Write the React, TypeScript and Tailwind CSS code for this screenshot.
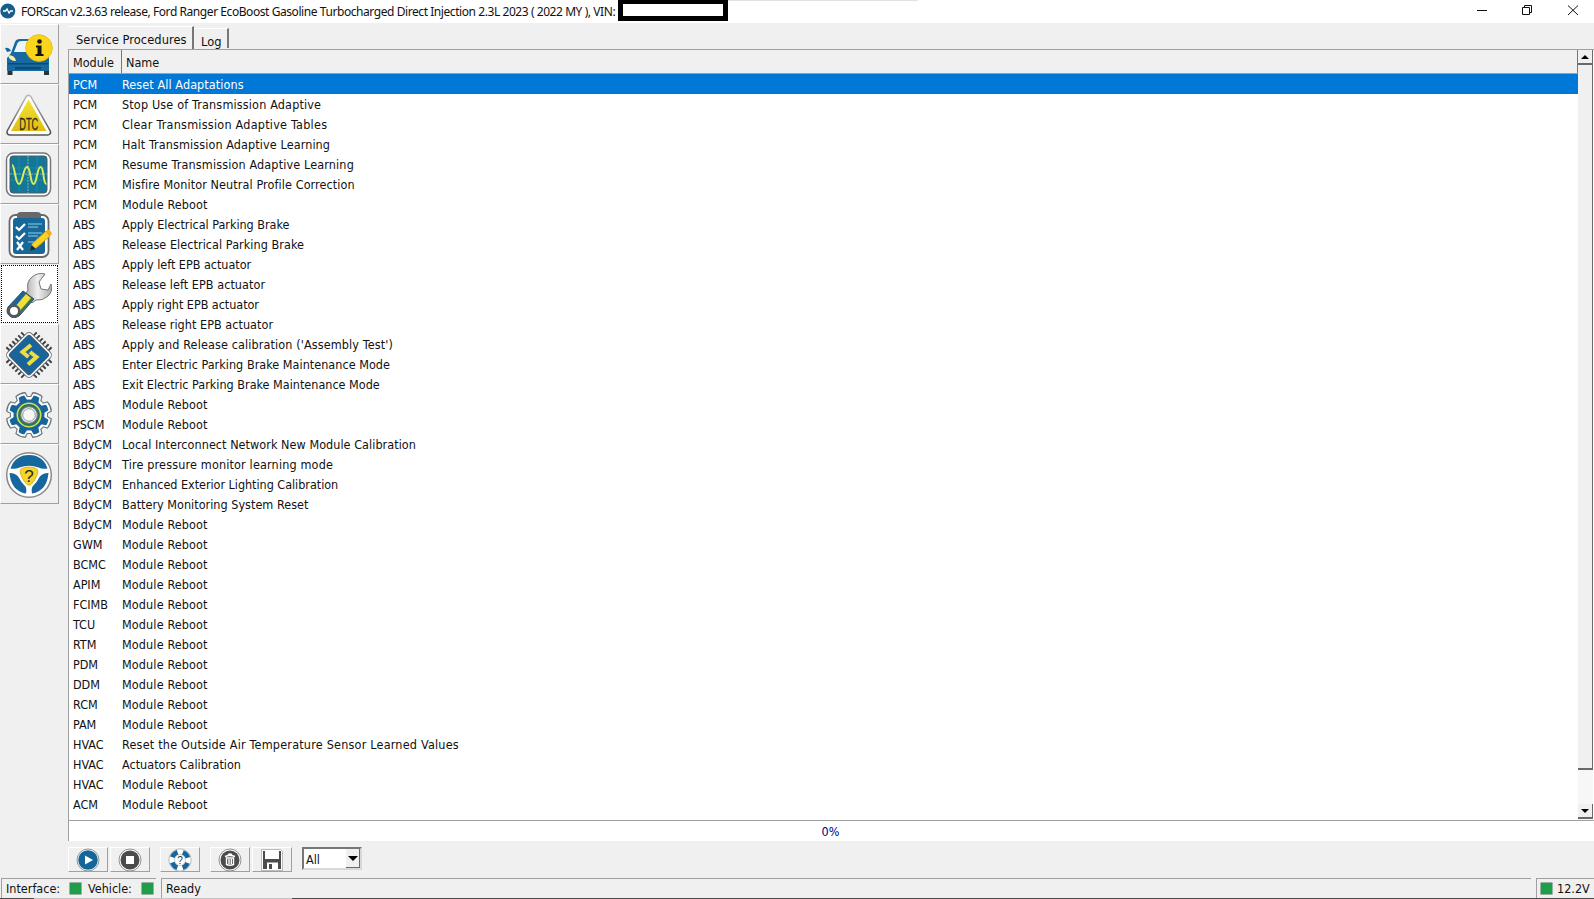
import React from 'react';

const REBOOT = 'tracking-[0.13px]';

const rows: [string, string, string][] = [
  ['PCM', 'Reset All Adaptations', 'tracking-[0.09px]'],
  ['PCM', 'Stop Use of Transmission Adaptive', 'tracking-[0.16px]'],
  ['PCM', 'Clear Transmission Adaptive Tables', 'tracking-[0.24px]'],
  ['PCM', 'Halt Transmission Adaptive Learning', 'tracking-[0.1px]'],
  ['PCM', 'Resume Transmission Adaptive Learning', 'tracking-[0.14px]'],
  ['PCM', 'Misfire Monitor Neutral Profile Correction', 'tracking-[0.1px]'],
  ['PCM', 'Module Reboot', REBOOT],
  ['ABS', 'Apply Electrical Parking Brake', 'tracking-[-0.02px]'],
  ['ABS', 'Release Electrical Parking Brake', 'tracking-[0.06px]'],
  ['ABS', 'Apply left EPB actuator', 'tracking-[-0.02px]'],
  ['ABS', 'Release left EPB actuator', 'tracking-[0.05px]'],
  ['ABS', 'Apply right EPB actuator', 'tracking-[-0.04px]'],
  ['ABS', 'Release right EPB actuator', 'tracking-[0.04px]'],
  ['ABS', "Apply and Release calibration ('Assembly Test')", 'tracking-[0.12px]'],
  ['ABS', 'Enter Electric Parking Brake Maintenance Mode', 'tracking-[0.03px]'],
  ['ABS', 'Exit Electric Parking Brake Maintenance Mode', 'tracking-[0px]'],
  ['ABS', 'Module Reboot', REBOOT],
  ['PSCM', 'Module Reboot', REBOOT],
  ['BdyCM', 'Local Interconnect Network New Module Calibration', 'tracking-[0.05px]'],
  ['BdyCM', 'Tire pressure monitor learning mode', 'tracking-[0.16px]'],
  ['BdyCM', 'Enhanced Exterior Lighting Calibration', 'tracking-[-0.03px]'],
  ['BdyCM', 'Battery Monitoring System Reset', 'tracking-[0.02px]'],
  ['BdyCM', 'Module Reboot', REBOOT],
  ['GWM', 'Module Reboot', REBOOT],
  ['BCMC', 'Module Reboot', REBOOT],
  ['APIM', 'Module Reboot', REBOOT],
  ['FCIMB', 'Module Reboot', REBOOT],
  ['TCU', 'Module Reboot', REBOOT],
  ['RTM', 'Module Reboot', REBOOT],
  ['PDM', 'Module Reboot', REBOOT],
  ['DDM', 'Module Reboot', REBOOT],
  ['RCM', 'Module Reboot', REBOOT],
  ['PAM', 'Module Reboot', REBOOT],
  ['HVAC', 'Reset the Outside Air Temperature Sensor Learned Values', 'tracking-[0.21px]'],
  ['HVAC', 'Actuators Calibration', 'tracking-[0.02px]'],
  ['HVAC', 'Module Reboot', REBOOT],
  ['ACM', 'Module Reboot', REBOOT],
];

const CarIcon = () => (
  <svg width="50" height="50" viewBox="0 0 50 50">
    <path d="M3.500 45v-7h5v7zM40 45v-7h5v7z" fill="#2d3238" />
    <path d="M7 23 11 12q1-3 5-3h16q4 0 6 4l4 10 3 4v14H3V28z" fill="#176a9f" />
    <path d="M10 22 13.500 13q1-2 4-2h15l5 11z" fill="#eef5f8" />
    <path d="M1 18q4-1 6 3l-4 1z" fill="#176a9f" />
    <path d="M4 33h40v1.500H4zM11 37h26v2.500H11z" fill="#0d4b77" />
    <path d="M4 25q7 0 8 6-7 0-8-6z" fill="#f5efb0" />
    <circle cx="35" cy="18" r="13.300" fill="#fbd51b" stroke="#f0bd12" />
    <circle cx="35.500" cy="11.500" r="2.300" fill="#171717" />
    <path d="M32 15.500h5.500v8.500h2v2h-8v-2h2v-6.500h-1.500z" fill="#171717" />
  </svg>
);

const DtcIcon = () => (
  <svg width="50" height="50" viewBox="0 0 50 50">
    <defs>
      <linearGradient id="dtcFill" x2="0" y2="1"><stop stopColor="#f4e431" /><stop offset="1" stopColor="#dfbd14" /></linearGradient>
      <linearGradient id="dtcRim" x2="0" y2="1"><stop stopColor="#b4b4b4" /><stop offset="1" stopColor="#555" /></linearGradient>
    </defs>
    <path d="M24.500 8.500 43.500 42H6z" fill="none" stroke="url(#dtcRim)" strokeWidth="7.500" strokeLinejoin="round" />
    <path d="M24.500 8.500 43.500 42H6z" fill="url(#dtcFill)" stroke="#fff" strokeWidth="4.500" strokeLinejoin="round" />
    <path d="M24.500 9.500 42.500 41H7z" fill="url(#dtcFill)" />
    <text x="24.800" y="40" textAnchor="middle" textLength="19" lengthAdjust="spacingAndGlyphs" fontFamily="Liberation Sans, sans-serif" fontSize="16.500" stroke="#2d3018" strokeWidth=".3" fill="#2d3018">DTC</text>
  </svg>
);

const ScopeIcon = () => (
  <svg width="50" height="50" viewBox="0 0 50 50">
    <rect x="2.500" y="3" width="44" height="43" rx="7" fill="#fff" stroke="#73777b" strokeWidth="1.500" />
    <rect x="6" y="6" width="37" height="37" rx="3" fill="#137799" stroke="#4d5a62" />
    <path d="M6 18h37M6 30h37M15 6v37M33 6v37" stroke="#2890a4" strokeWidth=".7" />
    <path d="M6 24h37M24 6v37" stroke="#7db4b4" strokeDasharray="2 1" />
    <path d="M8 15c3 0 3 19 7 19s4-17 8-17 3 17 6.500 17S33 17 36.500 17c4 0 2 17 6 17" fill="none" stroke="#d8ed59" strokeWidth="2" />
  </svg>
);

const ChecklistIcon = () => (
  <svg width="50" height="50" viewBox="0 0 50 50">
    <rect x="5.500" y="5" width="39" height="42" rx="6" fill="#fff" stroke="#66696c" strokeWidth="1.800" />
    <rect x="9" y="8" width="32" height="36" rx="3" fill="#176899" />
    <path d="M13 5q0-3 4-3h16q4 0 4 3v3H13z" fill="#67696b" />
    <path d="m12 17 3 3 6-6m-9 12 3 3 6-6m-8 9 6 8m0-8-6 8" fill="none" stroke="#fff" strokeWidth="2.200" />
    <path d="M24 14h14M24 17h10M24 23h14M24 26h10M24 32h9" stroke="#8ed0e8" />
    <path d="m28 34 14-13 4 5-14 12-5 2z" fill="#f7d51f" stroke="#d49a17" />
    <path d="m42 21 1.500-1.500q3 0 4.500 4.500l-2 2z" fill="#f3ae20" />
    <path d="m27.500 35 4.500 4-6 2z" fill="#172c40" />
  </svg>
);

const WrenchIcon = () => (
  <svg width="50" height="50" viewBox="0 0 50 50">
    <defs>
      <linearGradient id="steel"><stop stopColor="#a6a6a6" /><stop offset=".5" stopColor="#f0f0f0" /><stop offset="1" stopColor="#aaa" /></linearGradient>
    </defs>
    <path d="M24 20q-2-8 4-13 6-5 13-3l-6 8 2 7 7 1 3-6q2 8-3 12-5 5-12 4l-4 3-8-7z" fill="url(#steel)" stroke="#777" />
    <path d="m19 21 11 8-13 15q-4 5-10 3-6-4-3-10z" fill="#1a659b" stroke="#365368" />
    <path d="m23 25 6 4-12 15-6-5z" fill="#3c7655" />
    <path d="m22 24 5 4-13 15-4-5z" fill="#f0df3f" />
    <circle cx="10" cy="41" r="6.500" fill="#53585c" />
    <circle cx="10" cy="41" r="4" fill="#fff" />
  </svg>
);

const ChipIcon = () => (
  <svg width="50" height="50" viewBox="0 0 50 50">
    <g transform="rotate(45 25 25)">
      <path d="M14.500 3.500v43M18.700 3.500v43M22.900 3.500v43M27.100 3.500v43M31.300 3.500v43M35.500 3.500v43M3.500 14.500h43M3.500 18.700h43M3.500 22.900h43M3.500 27.100h43M3.500 31.300h43M3.500 35.500h43" stroke="#3b4045" strokeWidth="1.900" />
      <rect x="8" y="8" width="34" height="34" rx="4" fill="#fff" stroke="#777" />
      <rect x="10.500" y="10.500" width="29" height="29" rx="2" fill="#19659b" stroke="#315777" />
    </g>
    <path d="m27 15-8.500 7 6 5M26 22l6.500 5-8.500 7.500" fill="none" stroke="#ecdc45" strokeWidth="4" />
  </svg>
);

const toothAngles = [22.5, 67.5, 112.5, 157.5, 202.5, 247.5, 292.5, 337.5];

const GearLayer = ({ d, r }: { d: string; r: number }) => (
  <>
    {toothAngles.map((a) => (
      <path key={a} transform={`rotate(${a} 25 25)`} d={d} />
    ))}
    <circle cx="25" cy="25" r={r} />
  </>
);

const GearIcon = () => (
  <svg width="50" height="50" viewBox="0 0 50 50">
    <g fill="#69747b"><GearLayer d="M18.500 12 19.500 2.500q5.500-2 11 0L31.500 12z" r={19} /></g>
    <g fill="#fff"><GearLayer d="M19.500 13 20.500 3.500q4.500-1.500 9 0L30.500 13z" r={18} /></g>
    <g fill="#17649a"><GearLayer d="M20.500 13 22 5.200q3-.6 6 0L29.500 13z" r={15.5} /></g>
    <circle cx="25" cy="25" r="11.700" fill="#2e735d" stroke="#d4dd58" strokeWidth="1.600" />
    <circle cx="25" cy="25" r="8.300" fill="#e8ecec" stroke="#75817d" strokeWidth="1" />
    <circle cx="25" cy="25" r="6.300" fill="#f7f7f7" stroke="#929b9c" />
  </svg>
);

const WheelIcon = () => (
  <svg width="50" height="50" viewBox="0 0 50 50">
    <circle cx="25" cy="25" r="22.300" fill="#fff" stroke="#868a8d" strokeWidth="1.500" />
    <path d="M6.500 18.500Q11 5 25 5t18.500 13.500q-5 1-9-1-9.500-3.500-19 0-4 2-9 1zM5.500 23q6 0 9 4 3 6 6.500 9 2 2 1 7.500Q7 41 5.500 23zM44.500 23q-6 0-9 4-3 6-6.500 9-2 2-1 7.500Q43 41 44.500 23z" fill="#17679f" />
    <path d="M25 17q5 0 8 2 2 2 0 6-2 6-6 9.500-2 1.500-4 0-4-3.500-6-9.500-2-4 0-6 3-2 8-2z" fill="#f4d62b" stroke="#e0b61a" />
    <text x="25" y="32" textAnchor="middle" fontFamily="Liberation Sans, sans-serif" fontSize="17" fill="#252525">?</text>
  </svg>
);

const sidebar = [CarIcon, DtcIcon, ScopeIcon, ChecklistIcon, WrenchIcon, ChipIcon, GearIcon, WheelIcon];

const PlayIcon = () => (
  <svg width="24" height="24" viewBox="0 0 24 24">
    <circle cx="12" cy="12" r="11" fill="#fff" stroke="#8d9498" />
    <circle cx="12" cy="12" r="9.800" fill="#14659a" />
    <path d="m9 7.500 8 4.500-8 4.500z" fill="#fff" />
  </svg>
);
const StopIcon = () => (
  <svg width="24" height="24" viewBox="0 0 24 24">
    <circle cx="12" cy="12" r="11" fill="#fff" stroke="#929292" />
    <circle cx="12" cy="12" r="9.500" fill="#4b4b4d" />
    <path d="M8 8h8v8H8z" fill="#fff" />
  </svg>
);
const HelpIcon = () => (
  <svg width="24" height="24" viewBox="0 0 24 24">
    <circle cx="12" cy="12" r="11.200" fill="#fff" stroke="#a8adb0" strokeWidth=".8" />
    <circle cx="12" cy="12" r="8" fill="none" stroke="#17679b" strokeWidth="5" strokeDasharray="7.300 5.266" strokeDashoffset="3.650" transform="rotate(45 12 12)" />
    <circle cx="12" cy="12" r="5.500" fill="#fff" stroke="#9ca9af" strokeWidth=".6" />
    <text x="12" y="15.500" textAnchor="middle" fontFamily="Liberation Sans, sans-serif" fontSize="10" fill="#333">?</text>
  </svg>
);
const TrashIcon = () => (
  <svg width="24" height="24" viewBox="0 0 24 24">
    <circle cx="12" cy="12" r="11" fill="#fff" stroke="#929292" />
    <circle cx="12" cy="12" r="9.500" fill="#4b4b4d" />
    <path d="M7 8.500q5-2 10 0M10 7q2-2 4 0M8.500 10v6.500q3.500 1.500 7 0V10zM11 11v5M13.300 11v5" fill="none" stroke="#fff" strokeWidth="1.400" />
  </svg>
);
const SaveIcon = () => (
  <svg width="24" height="24" viewBox="0 0 24 24">
    <path d="M1.500 1.500h19l2 2v19h-21z" fill="#fff" stroke="#a0a0a0" strokeWidth=".7" />
    <path d="M3 3h2v8h14V3h2v18H3z" fill="#4b4b4d" />
    <path d="M7 14.500h11V21H7z" fill="#fff" />
    <path d="M9 16h3v5H9z" fill="#4b4b4d" />
  </svg>
);

const tools: [React.FC, string][] = [
  [PlayIcon, 'mr-[2px]'],
  [StopIcon, 'mr-[10px]'],
  [HelpIcon, 'mr-[10px]'],
  [TrashIcon, 'mr-[2px]'],
  [SaveIcon, 'mr-[10px]'],
];

const Led = () => <span className="h-[11px] w-[11px] bg-[#1f9e4a] shadow-[0_0_0_.5px_#46705a]" />;

export default function App() {
  return (
    <div className="flex h-[899px] w-[1594px] flex-col overflow-hidden bg-[#f0f0f0] font-['DejaVu_Sans_Condensed','DejaVu_Sans',sans-serif] text-[12.5px] leading-[20px] text-[#111] [font-stretch:condensed]">
      <header className="flex h-[23px] shrink-0 items-start bg-white">
        <svg className="mt-[3px] shrink-0" width="16" height="16" viewBox="0 0 16 16">
          <circle cx="7.800" cy="8" r="7.500" fill="#155e8c" />
          <path d="M3 8h2.500l1.500-2 2 4 1.500-2h2.500" fill="none" stroke="#fff" strokeWidth="1.300" />
        </svg>
        <h1 className="ml-[5px] w-[596px] pt-[2px] font-['Noto_Sans',sans-serif] text-[12px] whitespace-nowrap tracking-[-0.43px]">
          FORScan v2.3.63 release, Ford Ranger EcoBoost Gasoline Turbocharged Direct Injection 2.3L 2023 ( 2022 MY ), VIN:
        </h1>
        <div className="ml-px h-[21px] w-[110px] shrink-0 border-x-[5px] border-t-4 border-b-[5px] border-black bg-white" />
        <div className="h-px w-[190px] bg-[#e2e2e2]" />
        <svg className="ml-auto" width="130" height="23" viewBox="0 0 130 23" fill="none" stroke="#111">
          <path d="M13 10.500h10M58.500 7.500h7v7h-7zM60.500 7V5.500h7v7H66M104 5.500l10 9.500M114 5.500 104 15" />
        </svg>
      </header>

      <div className="flex h-[851px] shrink-0">
        <nav className="flex w-[68px] shrink-0 flex-col pt-px">
          {sidebar.map((Icon, i) => (
            <button
              key={i}
              className={
                i === 4
                  ? 'flex h-[60px] w-[59px] items-center justify-center border border-[#f0f0f0] bg-white pt-px pr-px outline-1 -outline-offset-2 outline-dotted outline-black'
                  : 'flex h-[60px] w-[59px] items-center justify-center border border-t-white border-r-[#a0a0a0] border-b-[#a0a0a0] border-l-white pt-px pr-px'
              }
            >
              <Icon />
            </button>
          ))}
        </nav>

        <main className="flex w-[1526px] flex-col">
          <div className="flex h-[26px] items-end">
            <div className="h-[23px] w-[126px] border-t border-r-2 border-t-white border-r-[#777] pl-[8px] text-[12.75px] leading-[25px] tracking-[0.06px] whitespace-nowrap">Service Procedures</div>
            <div className="mb-px h-[20px] w-[35px] border-t border-r-2 border-t-white border-r-[#777] pl-[7px] text-[12.75px] leading-[25px]">Log</div>
          </div>
          <div className="flex h-[772px] border-t border-b border-l border-[#a0a0a0] bg-white">
            <div className="w-[1509px]">
              <div className="flex h-[24px] border-b border-[#a0a0a0] bg-[#f0f0f0] leading-[26px]">
                <div className="w-[53px] border-r border-[#777] pl-1">Module</div>
                <div className="flex-1 border-r border-[#777] pl-[4px]">Name</div>
              </div>
              {rows.map(([module, name, tracking], i) => (
                <div key={i} className={i === 0 ? 'flex h-[20px] bg-[#0078d7] leading-[22px] text-white' : 'flex h-[20px] leading-[22px]'}>
                  <span className="w-[53px] pl-1 tracking-[-0.05px]">{module}</span>
                  <span className={`whitespace-nowrap ${tracking}`}>{name}</span>
                </div>
              ))}
            </div>
            <div className="flex w-[15px] flex-col bg-[#f7f7f7]">
              <div className="flex h-[15px] items-center justify-center border-r border-b-2 border-[#696969] bg-[#f0f0f0]">
                <svg width="8" height="4" viewBox="0 0 8 4"><path d="M0 4 4 0l4 4z" /></svg>
              </div>
              <div className="h-[705px] border-r border-b-2 border-[#696969] bg-[#f0f0f0]" />
              <div className="flex-1" />
              <div className="mb-px flex h-[15px] items-center justify-center border-r border-b-2 border-[#696969] bg-[#f0f0f0]">
                <svg width="8" height="4" viewBox="0 0 8 4"><path d="m0 0 4 4 4-4z" /></svg>
              </div>
            </div>
          </div>
          <div className="h-[20px] border-l border-[#a0a0a0] bg-white pr-[2px] text-center leading-[22px] text-[#000080]">0%</div>
          <div className="flex items-start pt-[6px]">
            {tools.map(([Icon, gap], i) => (
              <button key={i} className={`${gap} flex h-[25px] w-[40px] items-center justify-center border border-t-white border-r-[#a0a0a0] border-b-[#a0a0a0] border-l-white pr-px`}>
                <Icon />
              </button>
            ))}
            <div className="flex h-[23px] w-[60px] border-2 border-[#777] border-r-[#d8d8d8] border-b-[#d8d8d8] bg-white">
              <span className="flex-1 pl-[2px] leading-[21px]">All</span>
              <span className="flex w-[14px] items-center justify-center border-r border-b border-[#696969] bg-[#f0f0f0]">
                <svg width="10" height="5" viewBox="0 0 10 5"><path d="m0 0 5 5 5-5z" /></svg>
              </span>
            </div>
          </div>
        </main>
      </div>

      <footer className="flex h-[24px] shrink-0 items-end pl-px">
        <div className="flex h-[20px] w-[155px] items-center border-t border-l border-[#a0a0a0] pl-[4px]">
          <span className="w-[64px]">Interface:</span><Led />
          <span className="ml-[7px] w-[54px]">Vehicle:</span><Led />
        </div>
        <div className="ml-[5px] h-[20px] w-[1370px] border-t border-l border-[#a0a0a0] pl-1">Ready</div>
        <div className="ml-[5px] flex h-[20px] flex-1 items-center border-t border-l border-[#a0a0a0] pl-1">
          <Led /><span className="ml-[5px] whitespace-nowrap">12.2V</span>
        </div>
      </footer>
      <div className="flex h-px shrink-0">
        <div className="w-[34px] bg-[#4a4a4a]" />
        <div className="w-[258px] bg-[#c4c4c4]" />
        <div className="flex-1 bg-[#4a4a4a]" />
      </div>
    </div>
  );
}
